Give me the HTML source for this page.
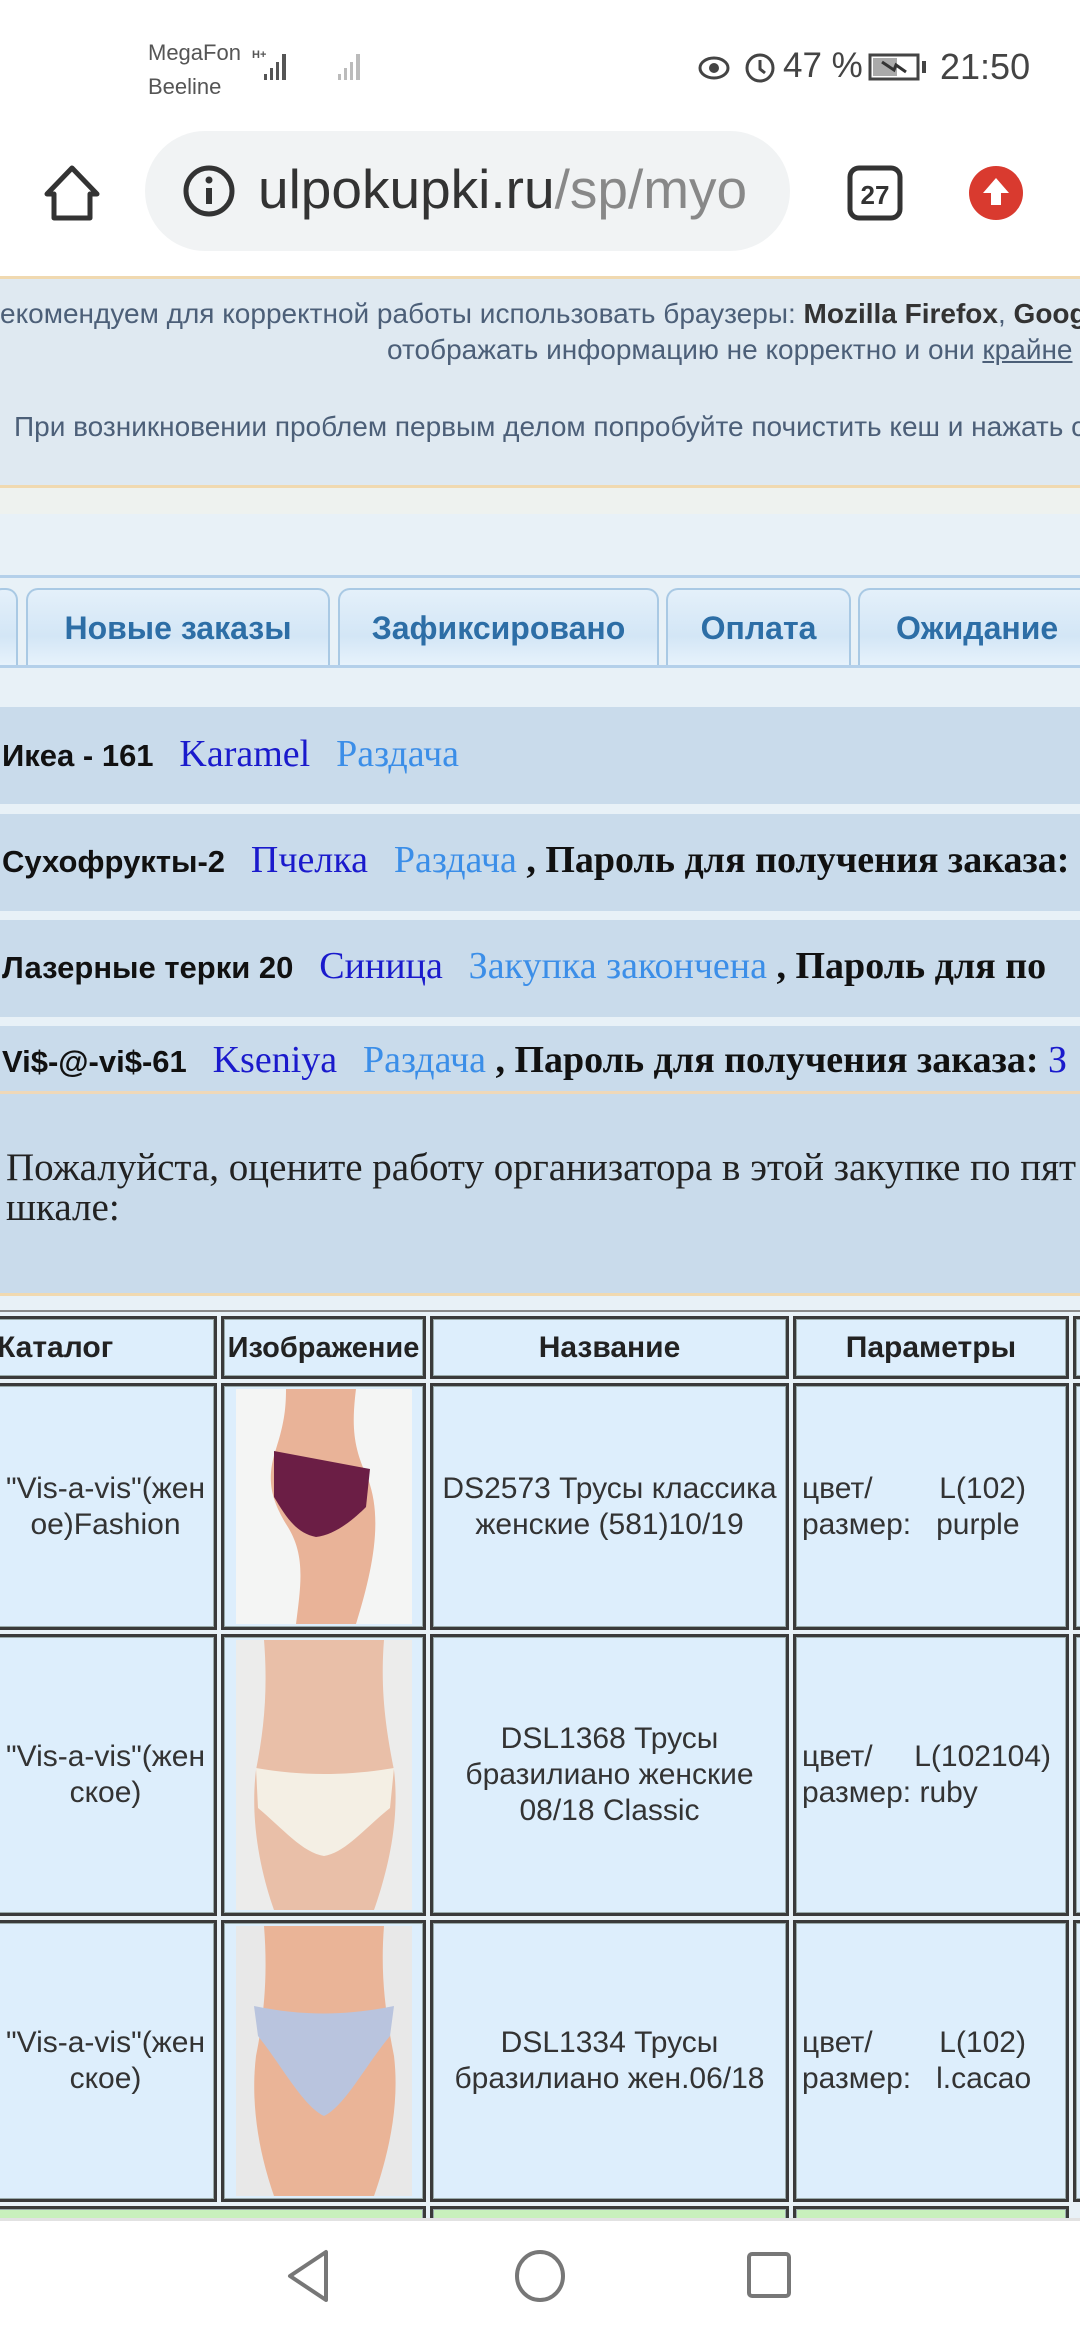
<!DOCTYPE html>
<html><head><meta charset="utf-8"><style>
*{margin:0;padding:0;box-sizing:border-box}
body{width:1080px;height:2340px;position:relative;overflow:hidden;background:#e8f1f7;font-family:"Liberation Sans",sans-serif}
.a{position:absolute;white-space:nowrap}
.row{position:absolute;left:0;width:1080px;background:#c9dbeb}
.rt{position:absolute;left:2px;font-size:31px;white-space:nowrap}
.b{font-weight:bold;color:#111;font-family:"Liberation Sans",sans-serif}
.s{font-family:"Liberation Serif",serif;font-size:38px}
.dk{color:#1a1acc}.lt{color:#3b8ee8}
.sb{font-family:"Liberation Serif",serif;font-weight:bold;color:#111;font-size:38px}
.tab{position:absolute;top:588px;height:79px;border:2px solid #a9c9e4;border-bottom:none;border-radius:12px 12px 0 0;background:linear-gradient(#e4f0fa,#d3e6f6 60%,#e8f3fc);color:#2d6ea6;font-weight:bold;font-size:32px;text-align:center;line-height:76px}
.c{position:absolute;background:#ddeefc;border:3px solid #3a3a3a;box-shadow:inset 0 0 0 1px #9aa;color:#333;font-size:30px;display:flex;align-items:center;justify-content:center;text-align:center;line-height:36px}
.h{font-weight:bold;color:#222}
</style></head><body>
<div class="a" style="left:0;top:0;width:1080px;height:276px;background:#fff"></div>
<div class="a" style="left:148px;top:36px;font-size:22px;color:#555;line-height:34px">MegaFon<br>Beeline</div>
<svg class="a" style="left:252px;top:46px" width="126" height="40"><text x="0" y="12" font-size="11" fill="#555" font-family="Liberation Sans" font-weight="bold">H+</text><g fill="#555"><rect x="12" y="28" width="3" height="6"/><rect x="18" y="22" width="3" height="12"/><rect x="24" y="16" width="3" height="18"/><rect x="30" y="8" width="4" height="26"/></g><g fill="#bbb"><rect x="86" y="28" width="3" height="6"/><rect x="92" y="22" width="3" height="12"/><rect x="98" y="16" width="3" height="18"/><rect x="104" y="8" width="4" height="26"/></g></svg>
<svg class="a" style="left:696px;top:50px" width="80" height="34"><ellipse cx="18" cy="18" rx="14" ry="10" fill="none" stroke="#444" stroke-width="3"/><circle cx="18" cy="18" r="5" fill="#444"/><circle cx="64" cy="18" r="13" fill="none" stroke="#444" stroke-width="3"/><path d="M64 10v9l5 4" stroke="#444" stroke-width="3" fill="none"/></svg>
<div class="a" style="left:783px;top:46px;font-size:35px;color:#444">47 %</div>
<svg class="a" style="left:868px;top:52px" width="62" height="30"><rect x="2" y="3" width="48" height="24" fill="none" stroke="#444" stroke-width="3"/><rect x="5" y="6" width="24" height="18" fill="#aaa"/><rect x="54" y="9" width="4" height="12" fill="#444"/><path d="M14 10l12 8 2-5 10 7" stroke="#333" stroke-width="3" fill="none"/></svg>
<div class="a" style="left:940px;top:46px;font-size:36px;color:#444">21:50</div>
<svg class="a" style="left:42px;top:164px" width="60" height="60"><path d="M30 4L5 30h7v24h36V30h7z" fill="none" stroke="#333" stroke-width="5" stroke-linejoin="round"/></svg>
<div class="a" style="left:145px;top:131px;width:645px;height:120px;border-radius:60px;background:#f1f3f4"></div>
<svg class="a" style="left:182px;top:164px" width="54" height="54"><circle cx="27" cy="27" r="23" fill="none" stroke="#333" stroke-width="5"/><rect x="24" y="24" width="6" height="16" fill="#333"/><circle cx="27" cy="16" r="3.5" fill="#333"/></svg>
<div class="a" style="left:258px;top:157px;font-size:55px;color:#333;width:505px;overflow:hidden">ulpokupki.ru<span style="color:#888">/sp/myo</span></div>
<svg class="a" style="left:846px;top:164px" width="60" height="60"><rect x="4" y="4" width="50" height="50" rx="9" fill="none" stroke="#333" stroke-width="5"/><text x="29" y="40" font-size="26" text-anchor="middle" fill="#333" font-family="Liberation Sans" font-weight="bold">27</text></svg>
<svg class="a" style="left:967px;top:164px" width="58" height="58"><circle cx="29" cy="29" r="27" fill="#d93a2f"/><path d="M29 14L16 29h8v12h10V29h8z" fill="#fff"/></svg>
<div class="a" style="left:0;top:276px;width:1080px;height:212px;background:#dfe9f1;border-top:3px solid #f0d9b0;border-bottom:3px solid #f0d9b0"></div>
<div class="a" style="left:0;top:298px;font-size:28px;color:#4c5f78">екомендуем для корректной работы использовать браузеры: <b style="color:#333">Mozilla Firefox</b>, <b style="color:#333">Google</b></div>
<div class="a" style="left:387px;top:334px;font-size:28px;color:#4c5f78">отображать информацию не корректно и они <u>крайне</u></div>
<div class="a" style="left:14px;top:411px;font-size:28px;color:#4c5f78">При возникновении проблем первым делом попробуйте почистить кеш и нажать с</div>
<div class="a" style="left:0;top:488px;width:1080px;height:26px;background:#eef2ef"></div>
<div class="a" style="left:0;top:575px;width:1080px;height:3px;background:#b4d0ea"></div>
<div class="tab" style="left:-10px;width:28px"></div>
<div class="tab" style="left:26px;width:304px">Новые заказы</div>
<div class="tab" style="left:338px;width:321px">Зафиксировано</div>
<div class="tab" style="left:666px;width:185px">Оплата</div>
<div class="tab" style="left:858px;width:240px;text-align:left;padding-left:36px">Ожидание</div>
<div class="a" style="left:0;top:665px;width:1080px;height:3px;background:#b4d0ea"></div>
<div class="row" style="top:707px;height:97px"></div>
<div class="rt" style="top:732px"><span class="b">Икеа - 161</span>&nbsp;&nbsp; <span class="s dk">Karamel</span>&nbsp;&nbsp; <span class="s lt">Раздача</span></div>
<div class="row" style="top:814px;height:97px"></div>
<div class="rt" style="top:838px"><span class="b">Сухофрукты-2</span>&nbsp;&nbsp; <span class="s dk">Пчелка</span>&nbsp;&nbsp; <span class="s lt">Раздача</span><span class="sb"> , Пароль для получения заказа:</span></div>
<div class="row" style="top:920px;height:97px"></div>
<div class="rt" style="top:944px"><span class="b">Лазерные терки 20</span>&nbsp;&nbsp; <span class="s dk">Синица</span>&nbsp;&nbsp; <span class="s lt">Закупка закончена</span><span class="sb"> , Пароль для по</span></div>
<div class="row" style="top:1026px;height:270px;border-bottom:3px solid #f0d9b0"></div>
<div class="a" style="left:0;top:1091px;width:1080px;height:3px;background:#efd8b8"></div>
<div class="rt" style="top:1038px"><span class="b">Vi$-@-vi$-61</span>&nbsp;&nbsp; <span class="s dk">Kseniya</span>&nbsp;&nbsp; <span class="s lt">Раздача</span><span class="sb"> , Пароль для получения заказа: </span><span class="s dk">З</span></div>
<div class="a" style="left:6px;top:1148px;font-family:'Liberation Serif',serif;font-size:39px;color:#222;line-height:40px">Пожалуйста, оцените работу организатора в этой закупке по пят<br>шкале:</div>
<div class="a" style="left:0;top:1310px;width:1080px;height:2px;background:#888"></div>
<div class="c h" style="left:-6px;top:1316px;width:223px;height:63px;justify-content:flex-start">Каталог</div>
<div class="c h" style="left:221px;top:1316px;width:205px;height:63px;font-size:29px">Изображение</div>
<div class="c h" style="left:430px;top:1316px;width:359px;height:63px">Название</div>
<div class="c h" style="left:793px;top:1316px;width:276px;height:63px">Параметры</div>
<div class="c" style="left:1073px;top:1316px;width:40px;height:63px"></div>

<div class="c" style="left:-6px;top:1383px;width:223px;height:247px">"Vis-a-vis"(жен<br>ое)Fashion</div>
<div class="c" style="left:221px;top:1383px;width:205px;height:247px"><svg width="176" height="235" viewBox="0 0 176 235"><rect width="176" height="235" fill="#f4f5f4"/><path d="M50 0h70c-5 40-2 60 12 90 15 40 5 90-12 145H60c5-40 10-70-10-100C35 110 30 90 40 60 48 35 50 20 50 0z" fill="#e9b398"/><path d="M38 62l96 18-4 38c-10 10-30 28-50 30-20-4-30-20-42-40z" fill="#6b1e45"/></svg></div>
<div class="c" style="left:430px;top:1383px;width:359px;height:247px">DS2573 Трусы классика<br>женские (581)10/19</div>
<div class="c" style="left:793px;top:1383px;width:276px;height:247px;justify-content:flex-start;text-align:left;padding-left:6px">цвет/&nbsp;&nbsp;&nbsp;&nbsp;&nbsp;&nbsp;&nbsp;&nbsp;L(102)<br>размер:&nbsp;&nbsp;&nbsp;purple</div>
<div class="c" style="left:1073px;top:1383px;width:40px;height:247px"></div>

<div class="c" style="left:-6px;top:1634px;width:223px;height:282px">"Vis-a-vis"(жен<br>ское)</div>
<div class="c" style="left:221px;top:1634px;width:205px;height:282px"><svg width="176" height="270" viewBox="0 0 176 270"><rect width="176" height="270" fill="#ececeb"/><path d="M28 0h120c-4 50 2 90 10 130 6 50-6 100-20 140H38C24 230 14 180 20 130 28 90 32 50 28 0z" fill="#e9bfa8"/><path d="M20 128c45 8 90 8 138 0l-4 40c-25 20-45 45-66 48-21-3-42-28-66-48z" fill="#f4efe4"/></svg></div>
<div class="c" style="left:430px;top:1634px;width:359px;height:282px">DSL1368 Трусы<br>бразилиано женские<br>08/18 Classic</div>
<div class="c" style="left:793px;top:1634px;width:276px;height:282px;justify-content:flex-start;text-align:left;padding-left:6px">цвет/&nbsp;&nbsp;&nbsp;&nbsp;&nbsp;L(102104)<br>размер:&nbsp;ruby</div>
<div class="c" style="left:1073px;top:1634px;width:40px;height:282px"></div>

<div class="c" style="left:-6px;top:1920px;width:223px;height:282px">"Vis-a-vis"(жен<br>ское)</div>
<div class="c" style="left:221px;top:1920px;width:205px;height:282px"><svg width="176" height="270" viewBox="0 0 176 270"><rect width="176" height="270" fill="#e8e8e8"/><path d="M28 0h120c-4 50 2 90 10 130 6 50-6 100-20 140H38C24 230 14 180 20 130 28 90 32 50 28 0z" fill="#eab497"/><path d="M18 80c48 10 92 10 140 0l-4 30c-25 30-45 70-66 80-21-10-42-50-66-80z" fill="#b9c4de"/></svg></div>
<div class="c" style="left:430px;top:1920px;width:359px;height:282px">DSL1334 Трусы<br>бразилиано жен.06/18</div>
<div class="c" style="left:793px;top:1920px;width:276px;height:282px;justify-content:flex-start;text-align:left;padding-left:6px">цвет/&nbsp;&nbsp;&nbsp;&nbsp;&nbsp;&nbsp;&nbsp;&nbsp;L(102)<br>размер:&nbsp;&nbsp;&nbsp;l.cacao</div>
<div class="c" style="left:1073px;top:1920px;width:40px;height:282px"></div>

<div class="c" style="left:-6px;top:2206px;width:432px;height:40px;background:#c8f0bc"></div>
<div class="c" style="left:430px;top:2206px;width:359px;height:40px;background:#c8f0bc"></div>
<div class="c" style="left:793px;top:2206px;width:276px;height:40px;background:#c8f0bc"></div>
<div class="a" style="left:0;top:2218px;width:1080px;height:122px;background:#fff;border-top:3px solid #e2e2e2"></div>
<svg class="a" style="left:280px;top:2246px" width="60" height="60"><path d="M46 6v48L10 30z" fill="none" stroke="#777" stroke-width="4" stroke-linejoin="round"/></svg>
<svg class="a" style="left:510px;top:2246px" width="60" height="60"><ellipse cx="30" cy="30" rx="23" ry="24" fill="none" stroke="#777" stroke-width="4"/></svg>
<svg class="a" style="left:740px;top:2246px" width="60" height="60"><rect x="9" y="8" width="40" height="42" rx="3" fill="none" stroke="#777" stroke-width="4"/></svg>
</body></html>
